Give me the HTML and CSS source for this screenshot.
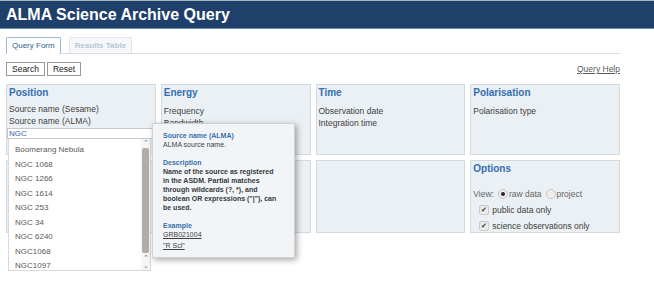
FILE: index.html
```html
<!DOCTYPE html>
<html lang="en">
<head>
    <meta charset="UTF-8">
    <title>ALMA Science Archive Query</title>
    <link rel="stylesheet" href="styles.css">
</head>
<body>
    <div class="page-header">
        <h1>ALMA Science Archive Query</h1>
    </div>

    <div class="content">
        <!-- Pestañas -->
        <div class="tabs">
            <span class="tab active">Query Form</span>
            <span class="tab disabled">Results Table</span>
        </div>

        <div class="toolbar">
            <button type="button" class="btn">Search</button>
            <button type="button" class="btn">Reset</button>
            <a href="#" class="help-link">Query Help</a>
        </div>

        <div class="panels">
            <div class="panel">
                <h3>Position</h3>
                <div class="pos-fields">
                    <div>Source name (Sesame)</div>
                    <div>Source name (ALMA)</div>
                </div>
                <input type="text" class="source-input" value="NGC">

                <div class="suggest">
                    <ul class="suggest-list">
                        <li>Boomerang Nebula</li>
                        <li>NGC 1068</li>
                        <li>NGC 1266</li>
                        <li>NGC 1614</li>
                        <li>NGC 253</li>
                        <li>NGC 34</li>
                        <li>NGC 6240</li>
                        <li>NGC1068</li>
                        <li>NGC1097</li>
                    </ul>
                    <div class="scrollbar">
                        <span class="arrow">&#8963;</span>
                        <div class="thumb"></div>
                        <span class="arrow">&#8963;</span>
                        <span class="arrow">&#8964;</span>
                    </div>
                </div>
            </div>

            <div class="panel">
                <h3>Energy</h3>
                <div class="fields">
                    <div>Frequency</div>
                    <div>Bandwidth</div>
                </div>
            </div>

            <div class="panel">
                <h3>Time</h3>
                <div class="fields">
                    <div>Observation date</div>
                    <div>Integration time</div>
                </div>
            </div>

            <div class="panel">
                <h3>Polarisation</h3>
                <div class="fields">
                    <div>Polarisation type</div>
                </div>
            </div>

            <div class="panel panel-low"></div>
            <div class="panel panel-low"></div>
            <div class="panel panel-low"></div>

            <div class="panel panel-low">
                <h3>Options</h3>
                <div class="view-row">
                    <span>View:</span>
                    <span class="radio checked"></span><span>raw data</span>
                    <span class="radio"></span><span>project</span>
                </div>
                <div class="check-row"><span class="check">&#10004;</span>public data only</div>
                <div class="check-row"><span class="check">&#10004;</span>science observations only</div>
            </div>

            <!-- Ayuda emergente -->
            <div class="tooltip">
                <div class="tip-title">Source name (ALMA)</div>
                <div>ALMA source name.</div>
                <div class="tip-title desc">Description</div>
                <div class="tip-strong">Name of the source as registered<br>in the ASDM. Partial matches<br>through wildcards (?, *), and<br>boolean OR expressions ("|"), can<br>be used.</div>
                <div class="tip-title example">Example</div>
                <div class="tip-example">GRB021004</div>
                <div class="tip-example">"R Scl"</div>
            </div>
        </div>
    </div>
</body>
</html>
```

FILE: styles.css
```css
body {
    margin: 0;
    min-height: 296px;
    font-family: 'Liberation Sans', Arial, sans-serif;
    font-size: 8.5px;
    color: hsl(0, 0%, 25%);
    background-color: hsl(0, 0%, 100%);
}

.page-header {
    background-color: hsl(214, 55%, 27%);
    border-top: 1px solid hsl(210, 10%, 70%);
    border-bottom: 1px solid hsl(212, 30%, 55%);
    height: 27px;
    padding-left: 6px;
    display: flex;
    align-items: center;
}

.page-header h1 {
    margin: 0;
    color: hsl(0, 0%, 100%);
    font-size: 16px;
    font-weight: bold;
}

.content {
    width: 614px;
    padding: 8px 6px 0 6px;
}

.tabs {
    display: flex;
    gap: 8px;
    border-bottom: 1px solid hsl(0, 0%, 87%);
    height: 16px;
    align-items: flex-end;
}

.tab {
    font-size: 8px;
    padding: 0 5px;
    height: 15px;
    line-height: 15px;
    border: 1px solid hsl(210, 30%, 82%);
    border-bottom: none;
    border-radius: 2px 2px 0 0;
}

.tab.active {
    color: hsl(212, 50%, 38%);
    border-color: hsl(210, 40%, 72%);
    background-color: hsl(0, 0%, 100%);
    height: 16px;
    margin-bottom: -1px;
}

.tab.disabled {
    color: hsl(210, 30%, 78%);
    background-color: hsl(210, 30%, 97%);
    border-color: hsl(210, 20%, 90%);
    font-weight: bold;
}

.toolbar {
    display: flex;
    align-items: center;
    gap: 2px;
    margin-top: 8px;
    height: 14px;
}

.btn {
    font-family: 'Liberation Sans', Arial, sans-serif;
    font-size: 8.5px;
    height: 14px;
    padding: 0 5px;
    line-height: 12px;
    border: 1px solid hsl(0, 0%, 60%);
    background-color: hsl(0, 0%, 100%);
    color: hsl(0, 0%, 10%);
    border-radius: 0;
}

.help-link {
    margin-left: auto;
    color: hsl(0, 0%, 35%);
    font-size: 8.5px;
}

.panels {
    position: relative;
    display: grid;
    grid-template-columns: repeat(4, 1fr);
    grid-template-rows: 71px 73px;
    gap: 5px;
    margin-top: 8px;
}

.panel {
    position: relative;
    background-color: hsl(210, 30%, 94%);
    border: 1px solid hsl(210, 12%, 85%);
    padding: 1px 2px;
}

.panel h3 {
    margin: 0;
    font-size: 10px;
    line-height: 14px;
    color: hsl(212, 55%, 45%);
}

.pos-fields {
    margin-top: 3px;
    line-height: 12px;
}

.fields {
    margin-top: 6px;
    line-height: 11.5px;
}

.source-input {
    display: block;
    box-sizing: border-box;
    height: 11px;
    margin: 1px 0 0 -2px;
    width: calc(100% + 4px);
    border: 1px solid hsl(0, 0%, 78%);
    padding: 0 1px;
    font-family: 'Liberation Sans', Arial, sans-serif;
    font-size: 8px;
    color: hsl(212, 50%, 40%);
    background-color: hsl(0, 0%, 100%);
}

.suggest {
    position: absolute;
    left: 1px;
    top: 54px;
    width: 141px;
    height: 131px;
    display: flex;
    background-color: hsl(0, 0%, 100%);
    border: 1px solid hsl(0, 0%, 85%);
    border-top: none;
    z-index: 2;
}

.suggest-list {
    list-style: none;
    margin: 0;
    padding: 4px 0 0 0;
    flex: 1;
    overflow: hidden;
}

.suggest-list li {
    height: 14.5px;
    line-height: 14.5px;
    padding-left: 6px;
    color: hsl(0, 0%, 35%);
    font-size: 8px;
}

.scrollbar {
    width: 9px;
    display: flex;
    flex-direction: column;
    align-items: center;
    background-color: hsl(0, 0%, 96%);
}

.scrollbar .arrow {
    font-size: 7px;
    line-height: 8px;
    height: 8px;
    color: hsl(0, 0%, 45%);
}

.scrollbar .thumb {
    flex: 1;
    width: 7px;
    margin: 1px 0;
    background-color: hsl(20, 5%, 68%);
    border-radius: 2px;
}

.view-row {
    display: flex;
    align-items: center;
    margin-top: 12px;
    height: 12px;
    color: hsl(0, 0%, 40%);
}

.view-row .radio {
    width: 8px;
    height: 8px;
    border-radius: 50%;
    border: 1px solid hsl(0, 0%, 78%);
    background-color: hsl(0, 0%, 93%);
    margin: 0 1px 0 4px;
    position: relative;
}

.view-row .radio.checked::after {
    content: "";
    position: absolute;
    left: 2px;
    top: 2px;
    width: 4px;
    height: 4px;
    border-radius: 50%;
    background-color: hsl(0, 0%, 15%);
}

.check-row {
    display: flex;
    align-items: center;
    height: 16px;
    margin-top: 2px;
    margin-left: 6px;
    color: hsl(0, 0%, 25%);
}

.check-row + .check-row {
    margin-top: 0;
}

.check {
    width: 8px;
    height: 8px;
    border: 1px solid hsl(0, 0%, 80%);
    background-color: hsl(0, 0%, 92%);
    border-radius: 2px;
    font-size: 7px;
    line-height: 8px;
    text-align: center;
    color: hsl(0, 0%, 20%);
    margin-right: 3px;
}

.tooltip {
    position: absolute;
    left: 146px;
    top: 39px;
    width: 131px;
    height: 126px;
    padding: 7px 0 0 10px;
    background-color: hsl(210, 30%, 96%);
    border: 1px solid hsl(0, 0%, 82%);
    box-shadow: 2px 2px 6px hsla(0, 0%, 0%, 0.35);
    font-size: 7px;
    line-height: 9px;
    color: hsl(0, 0%, 25%);
    white-space: nowrap;
    z-index: 3;
}

.tip-title {
    color: hsl(212, 50%, 45%);
    font-weight: bold;
}

.tip-title.desc {
    margin-top: 9px;
}

.tip-title.example {
    margin-top: 9px;
}

.tip-strong {
    font-weight: bold;
    color: hsl(0, 0%, 22%);
}

.tip-example {
    text-decoration: underline;
    line-height: 10.5px;
}
```
